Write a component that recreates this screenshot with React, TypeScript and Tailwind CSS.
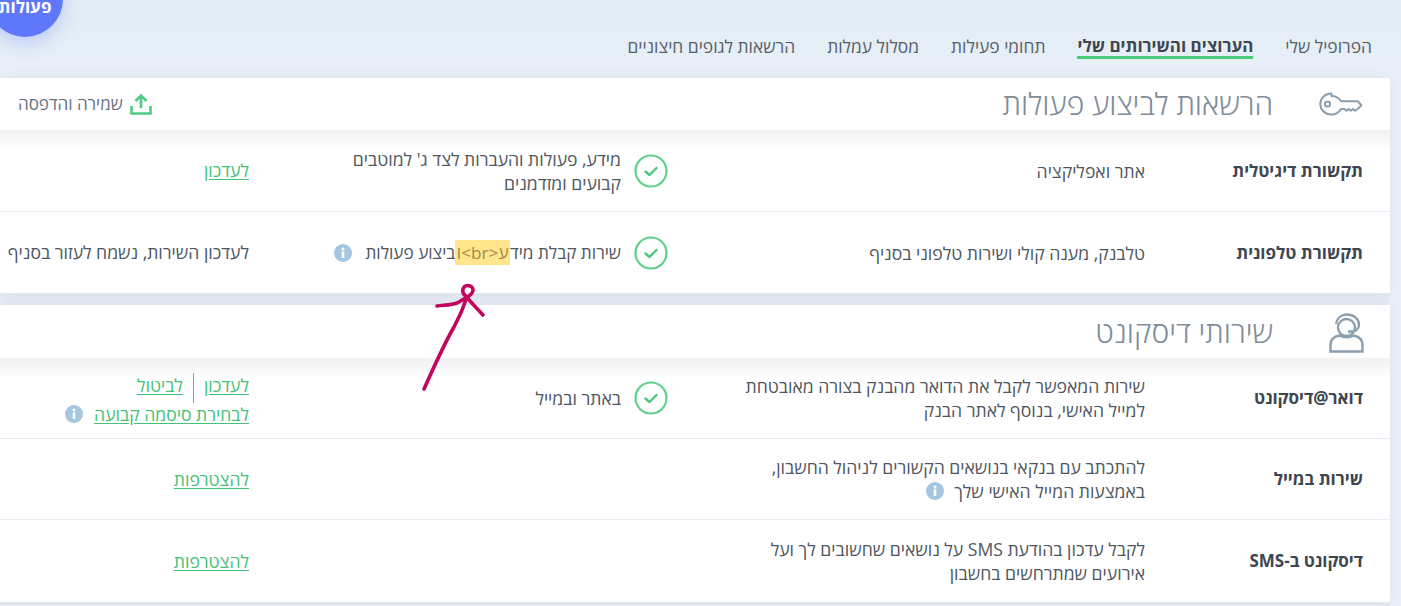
import type { ReactNode } from "react";

const font = { fontFamily: '"Open Sans", "Liberation Sans", sans-serif' };

function CheckCircle() {
  return (
    <svg width="34" height="34" viewBox="0 0 34 34" fill="none" className="shrink-0 mr-[1px]">
      <circle cx="17" cy="17" r="15.5" stroke="#5ed08c" strokeWidth="2.2" />
      <path d="M11.5 17.5l4 3.5 7-7" stroke="#4cc77e" strokeWidth="2.4" strokeLinecap="round" strokeLinejoin="round" />
    </svg>
  );
}

function Info() {
  return (
    <svg width="18" height="18" viewBox="0 0 18 18" className="shrink-0">
      <circle cx="9" cy="9" r="9" fill="#a5c6de" />
      <rect x="7.7" y="7.4" width="2.6" height="6.6" fill="#fff" />
      <circle cx="9" cy="5" r="1.5" fill="#fff" />
    </svg>
  );
}

function KeyIcon() {
  return (
    <svg width="46" height="24" viewBox="0 0 46 24" fill="none" stroke="#8c9fae" strokeWidth="2" strokeLinejoin="round" strokeLinecap="round">
      <path d="M12.5 1.5C6 1.5 1.3 6 1.3 12s4.7 10.5 11.2 10.5c4.5 0 7.5-2 9.5-5.5h3.5l2 1.8 2-1.8 2.2 1.8 2.3-1.8 2.2 1.8 2.3-1.8 4-3.8-3.800-4H22c-2-3.200-5-5.200-9.500-5.200z" />
      <circle cx="8.5" cy="12" r="2.6" />
    </svg>
  );
}

function AgentIcon() {
  return (
    <svg width="36" height="40" viewBox="0 0 36 40" fill="none" stroke="#8c9fae" strokeWidth="2.4" className="mt-[2px]">
      <circle cx="17.5" cy="14.5" r="8.5" />
      <path d="M7 11C8 5 12.5 1.5 18 1.5c6.5 0 12 4.5 12 10 0 4-3 6.5-6.5 7H19" />
      <path d="M1.5 38.500v-6.500c0-5 3.500-8.500 9-9.500 4 2.500 10 2.500 14 0 5.500 1 9 4.500 9 9.500v6.500H1.500z" />
    </svg>
  );
}

function UploadIcon() {
  return (
    <svg width="22" height="22" viewBox="0 0 22 22" fill="none" stroke="#4fcb82" strokeWidth="2.6">
      <path d="M11 15V2.5M5.5 8L11 2.500 16.500 8" />
      <path d="M1.5 13v7.500h19V13" />
    </svg>
  );
}

function GreenLink({ children }: { children: ReactNode }) {
  return <a className="text-[#45c278] underline underline-offset-2 whitespace-nowrap">{children}</a>;
}

interface RowProps {
  name: string;
  desc: ReactNode;
  status?: ReactNode;
  action?: ReactNode;
  height: string;
  first?: boolean;
}

function Row({ name, desc, status, action, height, first }: RowProps) {
  return (
    <div
      className={`flex items-center border-b border-[#e8edf2] last:border-b-0 ${height} ${
        first ? "bg-gradient-to-b from-[#f1f1f2] to-white to-[25%]" : "bg-white"
      }`}
    >
      <div className="w-[245px] shrink-0 pr-[27px] text-[17px] font-bold text-[#3d4650]">{name}</div>
      <div className="w-[476px] shrink-0 leading-6 whitespace-nowrap">{desc}</div>
      <div className="w-[420px] shrink-0 flex items-center gap-[13px]">
        {status && <CheckCircle />}
        {status}
      </div>
      <div className="flex-1 min-w-0">{action}</div>
    </div>
  );
}

function SectionHeader({ icon, title, extra, height }: { icon: ReactNode; title: string; extra?: ReactNode; height: string }) {
  return (
    <div className={`${height} flex items-center bg-white`}>
      <div className="w-[117px] shrink-0 pr-[25px] flex">{icon}</div>
      <h2 className="text-[30px] font-light text-[#7f8c99] leading-none whitespace-nowrap">{title}</h2>
      {extra}
    </div>
  );
}

export default function App() {
  const tabs = ["הפרופיל שלי", "הערוצים והשירותים שלי", "תחומי פעילות", "מסלול עמלות", "הרשאות לגופים חיצוניים"];

  return (
    <div
      dir="rtl"
      style={font}
      className="relative w-[1401px] h-[606px] overflow-hidden bg-gradient-to-b from-[#e3edf4] to-[#e8eff8] to-[15%] text-[17.6px] text-[#4e5661]"
    >
      <nav className="h-[78px] flex items-start gap-[32px] pr-[29px] pt-[35px]">
        {tabs.map((tab, i) => (
          <span
            key={tab}
            className={`h-[24px] leading-[22px] whitespace-nowrap ${
              i === 1 ? "text-[17px] font-bold text-[#3d4650] border-b-[3px] border-[#48c97c]" : "text-[17.4px] text-[#56606b]"
            }`}
          >
            {tab}
          </span>
        ))}
      </nav>

      <div className="mr-[11px] h-[528px] flex flex-col bg-[#e6eaf2]">
        <section className="shadow-[0_0_12px_rgba(90,110,140,0.08)]">
          <SectionHeader
            height="h-[52px]"
            icon={<KeyIcon />}
            title="הרשאות לביצוע פעולות"
            extra={
              <button className="mr-auto pl-[18px] flex items-center gap-[7px] text-[17px] text-[#67727e]">
                <UploadIcon />
                <span>שמירה והדפסה</span>
              </button>
            }
          />
          <Row
            first
            height="h-[82px]"
            name="תקשורת דיגיטלית"
            desc="אתר ואפליקציה"
            status={
              <p className="leading-6 whitespace-nowrap">
                מידע, פעולות והעברות לצד ג' למוטבים
                <br />
                קבועים ומזדמנים
              </p>
            }
            action={<GreenLink>לעדכון</GreenLink>}
          />
          <Row
            height="h-[81px]"
            name="תקשורת טלפונית"
            desc="טלבנק, מענה קולי ושירות טלפוני בסניף"
            status={
              <>
                <span className="whitespace-nowrap text-[17.2px]">
                  שירות קבלת מיד
                  <span className="bg-[#ffe68c] text-[#a08a48] py-[1px] px-[1.5px]">ע&lt;br&gt;ו</span>
                  ביצוע פעולות
                </span>
                <Info />
              </>
            }
            action={<span className="whitespace-nowrap">לעדכון השירות, נשמח לעזור בסניף</span>}
          />
        </section>

        <section className="mt-[12px] shadow-[0_0_12px_rgba(90,110,140,0.08)]">
          <SectionHeader height="h-[53px]" icon={<AgentIcon />} title="שירותי דיסקונט" />
          <Row
            first
            height="h-[81px]"
            name="דואר@דיסקונט"
            desc={
              <>
                שירות המאפשר לקבל את הדואר מהבנק בצורה מאובטחת
                <br />
                למייל האישי, בנוסף לאתר הבנק
              </>
            }
            status={<span>באתר ובמייל</span>}
            action={
              <div className="flex flex-col mt-[2px]">
                <div className="flex items-center h-[30px]">
                  <span className="mb-[6px]">
                    <GreenLink>לעדכון</GreenLink>
                  </span>
                  <span className="mx-[10px] w-px h-[30px] bg-[#48c97c]" />
                  <span className="mb-[6px]">
                    <GreenLink>לביטול</GreenLink>
                  </span>
                </div>
                <div className="flex items-center gap-[11px] h-[22px]">
                  <GreenLink>לבחירת סיסמה קבועה</GreenLink>
                  <Info />
                </div>
              </div>
            }
          />
          <Row
            height="h-[81px]"
            name="שירות במייל"
            desc={
              <>
                להתכתב עם בנקאי בנושאים הקשורים לניהול החשבון,
                <br />
                <span className="inline-flex items-center gap-[10px]">
                  באמצעות המייל האישי שלך
                  <Info />
                </span>
              </>
            }
            action={<GreenLink>להצטרפות</GreenLink>}
          />
          <Row
            height="h-[82px]"
            name="דיסקונט ב-SMS"
            desc={
              <>
                לקבל עדכון בהודעת SMS על נושאים שחשובים לך ועל
                <br />
                אירועים שמתרחשים בחשבון
              </>
            }
            action={<GreenLink>להצטרפות</GreenLink>}
          />
        </section>
      </div>

      <div className="absolute left-[-13px] top-[-39px] w-[76px] h-[76px] rounded-full bg-[#5f78fb] shadow-[0_6px_18px_rgba(95,120,251,0.3)] flex items-end justify-center pb-[20px] text-white font-bold text-[17px] leading-5">
        פעולות
      </div>

      <svg className="absolute left-[415px] top-[275px] pointer-events-none" width="80" height="125" viewBox="415 275 80 125" fill="none" stroke="#c1045c" strokeWidth="3.6" strokeLinecap="round" strokeLinejoin="round">
        <path d="M424 389c9-20 20-45 30-62 6-11 10-21 13-30" />
        <path d="M467 297c-3-2-5-5-4-8s4-4 7-3 4 4 2 7-3 3-5 4z" />
        <path d="M437 306c8-1 15-1 20-3 4-2 7-4 10-6 3 5 10 11 16 18" />
      </svg>
    </div>
  );
}
